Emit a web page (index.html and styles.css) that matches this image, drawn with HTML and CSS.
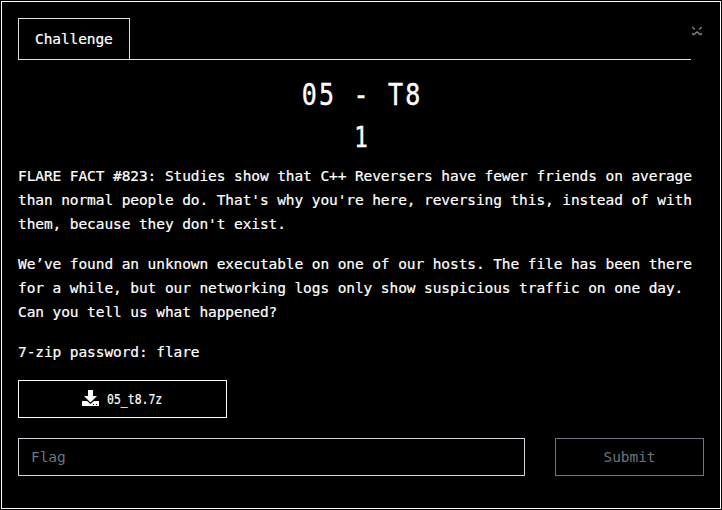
FILE: index.html
```html
<!DOCTYPE html>
<html lang="en">
<head>
<meta charset="utf-8">
<title>Challenge</title>
<link rel="stylesheet" href="styles.css">
</head>
<body>
<main class="modal">
  <header class="top">
    <nav class="tabs"><a class="tab">Challenge</a></nav>
    <button class="close" type="button" aria-label="Close">
      <svg width="12" height="10" viewBox="0 0 12 10"><path d="M1.300 1 3.800 3.500M10.700 1 8.200 3.500M1 7.300 2.800 8.500 6 6 9.200 8.500 11 7.300" fill="none" stroke="#808080" stroke-width="1.500"/></svg>
    </button>
  </header>
  <h2 class="title">05 - T8</h2>
  <h3 class="points">1</h3>
  <div class="desc">
    <p>FLARE FACT #823: Studies show that C++ Reversers have fewer friends on average<br>than normal people do. That's why you're here, reversing this, instead of with<br>them, because they don't exist.</p>
    <p>We’ve found an unknown executable on one of our hosts. The file has been there<br>for a while, but our networking logs only show suspicious traffic on one day.<br>Can you tell us what happened?</p>
    <p>7-zip password: flare</p>
  </div>
  <a class="file">
    <svg width="17" height="17" viewBox="0 0 17 17"><path fill="#fff" d="M6 0h5v6h4L8.500 12.500 2 6h4zM0 11h5l3.500 3 3.500-3h5v5H0z"/><path fill="#000" d="M11 14h1v1h-1zM14 14h1v1h-1z"/></svg>
    <span class="file-name">05_t8.7z</span>
  </a>
  <form class="answer">
    <input class="flag" type="text" placeholder="Flag">
    <button class="submit" type="button">Submit</button>
  </form>
</main>
</body>
</html>
```
FILE: styles.css
```css
* { box-sizing: border-box; }
body {
  margin: 0;
  padding: 1px;
  height: 510px;
  background: #000;
  color: #fff;
  font: 14.5px/24px "DejaVu Sans Mono", monospace;
  letter-spacing: -0.09px;
}
.modal {
  width: 720px;
  height: 508px;
  border: 1px solid #fff;
  padding: 16px;
}
.top { display: flex; height: 42px; }
.tabs { width: 673px; border-bottom: 1px solid #dee2e6; }
.tab {
  display: block;
  width: 112px;
  height: 42px;
  padding: 8px 16px;
  border: 1px solid #dee2e6;
}
.tab, .desc { -webkit-text-stroke: 0.2px #fff; }
.close { height: 10px; margin: 8px 0 0 0; padding: 0; border: 0; background: none; }
.close svg { display: block; }
.title, .points {
  margin: 0;
  font-weight: 400;
  text-align: center;
  transform: scaleX(0.82);
  -webkit-text-stroke: 0.4px #fff;
}
.title { margin-top: 16px; font-size: 30.5px; line-height: 38px; letter-spacing: 2.7px; text-indent: 2.7px; }
.points { margin-top: 7px; font-size: 27.5px; line-height: 32px; padding-bottom: 2px; }
.desc { margin-top: 9px; white-space: nowrap; }
.desc p { margin: 0 0 16px; }
.file {
  display: flex;
  align-items: center;
  justify-content: center;
  gap: 8px;
  width: 209px;
  height: 38px;
  padding: 0 2px 1px 0;
  border: 1px solid #fff;
}
.file-name {
  width: 55px;
  font-size: 13.5px;
  letter-spacing: 0;
  transform: scaleX(0.85);
  transform-origin: left;
  -webkit-text-stroke: 0.2px #fff;
}
.answer { display: flex; gap: 30px; margin-top: 20px; }
.flag, .submit {
  height: 38px;
  margin: 0;
  background: #000;
  color: #6c757d;
  font: inherit;
  letter-spacing: inherit;
}
.flag { width: 507px; padding: 0 12px; border: 1px solid #ced4da; }
.flag::placeholder { color: #6c757d; }
.submit { width: 149px; padding: 0; border: 1px solid #6c757d; }
```
